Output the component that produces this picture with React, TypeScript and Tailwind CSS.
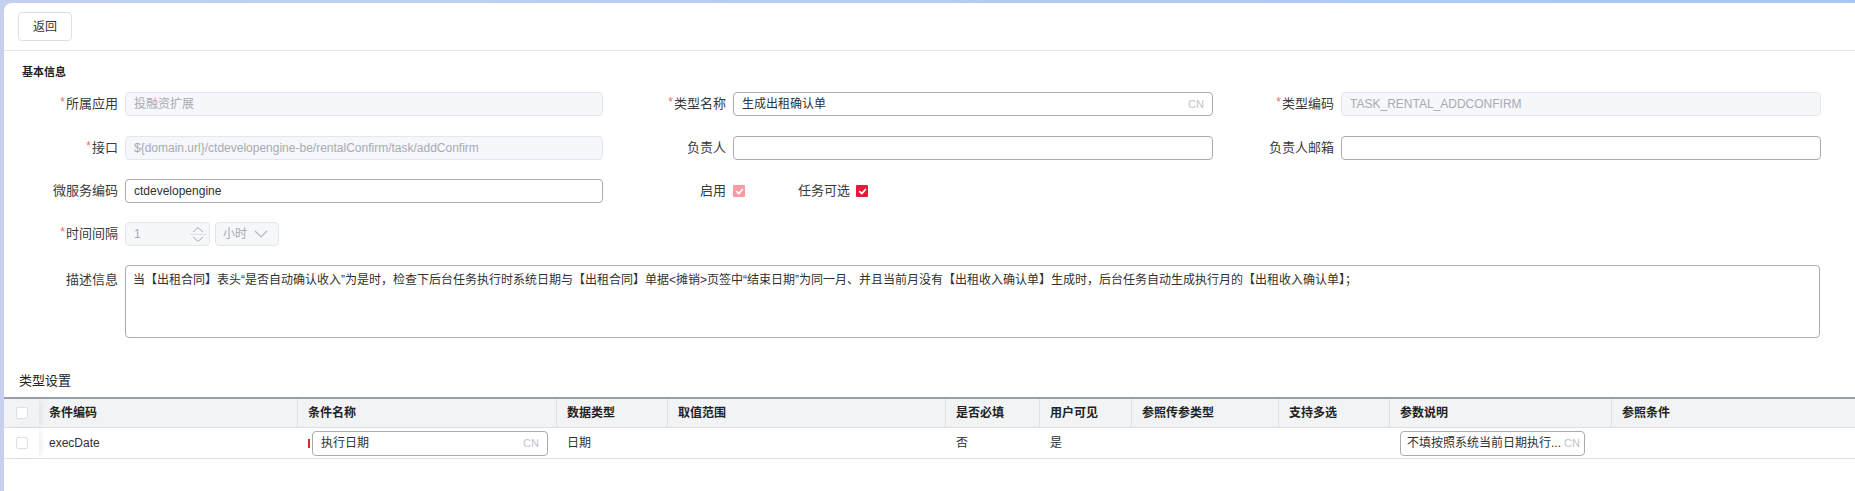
import React from 'react';

const font = "font-['Liberation_Sans','Noto_Sans_CJK_SC',sans-serif]";

function Req() {
  return <span className="text-[#f56c6c] text-[12px] relative -top-[2px] mr-[1px]">*</span>;
}

function Label({ text, required, top }: { text: string; required?: boolean; top?: boolean }) {
  return (
    <div
      className={`w-[115px] shrink-0 pr-[7px] text-right text-[13px] text-[#3a3a3a] ${
        top ? 'pt-[6px] leading-[18px]' : 'leading-[24px]'
      }`}
    >
      {required && <Req />}
      {text}
    </div>
  );
}

function TextInput({
  value,
  disabled,
  cn,
  className = '',
}: {
  value?: string;
  disabled?: boolean;
  cn?: boolean;
  className?: string;
}) {
  return (
    <div
      className={`h-[24px] flex items-center rounded-[4px] border text-[12px] ${
        disabled ? 'bg-[#f5f7fa] border-[#e4e7ed] text-[#a8abb2]' : 'bg-white border-[#a8abb2] text-[#303133]'
      } ${className}`}
    >
      <span className="flex-1 whitespace-nowrap overflow-hidden">{value}</span>
      {cn && <span className="text-[11px] text-[#c0c4cc] ml-[2px]">CN</span>}
    </div>
  );
}

function CheckMark({ color }: { color: string }) {
  return (
    <span className={`inline-flex w-[12px] h-[12px] items-center justify-center rounded-[1px] ${color}`}>
      <svg width="9" height="9" viewBox="0 0 10 10">
        <path d="M2 5.2 L4.2 7.3 L8.2 2.8" fill="none" stroke="white" strokeWidth="2" strokeLinecap="round" strokeLinejoin="round" />
      </svg>
    </span>
  );
}

function Box() {
  return <span className="block w-[12px] h-[12px] rounded-[2px] border border-[#dcdfe6] bg-white" />;
}

const cols = [
  '',
  '条件编码',
  '条件名称',
  '数据类型',
  '取值范围',
  '是否必填',
  '用户可见',
  '参照传参类型',
  '支持多选',
  '参数说明',
  '参照条件',
];

const gridCols =
  'grid grid-cols-[35px_259px_259px_111px_278px_94px_92px_147px_111px_222px_243px]';

export default function App() {
  return (
    <div className={`min-h-screen bg-gradient-to-r from-[#c4d0ee] to-[#a7c7f2] pt-[3px] pl-[4px] ${font}`}>
      <div className="bg-white rounded-tl-[8px] min-h-[488px]">
        {/* toolbar */}
        <div className="h-[48px] border-b border-[#e1e2ea] flex items-center pl-[14px]">
          <button className="w-[54px] h-[29px] rounded-[4px] border border-[#dcdfe6] text-[12px] text-[#333] bg-white">
            返回
          </button>
        </div>

        {/* basic info */}
        <div className="pl-[18px] pt-[14px] text-[11px] leading-[15px] font-bold text-[#222]">基本信息</div>

        <div className="pl-[6px] mt-[12px] flex flex-col">
          <div className="grid grid-cols-[608px_608px_608px]">
            <div className="flex">
              <Label text="所属应用" required />
              <TextInput value="投融资扩展" disabled className="w-[478px] px-[8px]" />
            </div>
            <div className="flex">
              <Label text="类型名称" required />
              <TextInput value="生成出租确认单" cn className="w-[480px] px-[8px]" />
            </div>
            <div className="flex">
              <Label text="类型编码" required />
              <TextInput value="TASK_RENTAL_ADDCONFIRM" disabled className="w-[480px] px-[8px]" />
            </div>
          </div>

          <div className="grid grid-cols-[608px_608px_608px] mt-[20px]">
            <div className="flex">
              <Label text="接口" required />
              <TextInput value="${domain.url}/ctdevelopengine-be/rentalConfirm/task/addConfirm" disabled className="w-[478px] px-[8px]" />
            </div>
            <div className="flex">
              <Label text="负责人" />
              <TextInput className="w-[480px] px-[8px]" />
            </div>
            <div className="flex">
              <Label text="负责人邮箱" />
              <TextInput className="w-[480px] px-[8px]" />
            </div>
          </div>

          <div className="grid grid-cols-[608px_608px_608px] mt-[19px]">
            <div className="flex">
              <Label text="微服务编码" />
              <TextInput value="ctdevelopengine" className="w-[478px] px-[8px]" />
            </div>
            <div className="flex items-center">
              <Label text="启用" />
              <CheckMark color="bg-[#f79ba5]" />
              <div className="w-[111px] pr-[6px] text-right text-[13px] text-[#3a3a3a] leading-[24px]">任务可选</div>
              <CheckMark color="bg-[#e8183a]" />
            </div>
            <div />
          </div>

          <div className="flex mt-[19px]">
            <Label text="时间间隔" required />
            <div className="w-[85px] h-[24px] flex items-center rounded-[4px] border border-[#e4e7ed] bg-[#f5f7fa] text-[12px] text-[#a8abb2]">
              <span className="flex-1 pl-[8px]">1</span>
              <div className="w-[22px] h-full flex flex-col items-center justify-center">
                <svg width="12" height="7" viewBox="0 0 12 7">
                  <path d="M1 6 L6 1.5 L11 6" fill="none" stroke="#a8abb2" strokeWidth="1" />
                </svg>
                <span className="block w-[16px] h-px bg-[#dcdfe6] my-[1px]" />
                <svg width="12" height="7" viewBox="0 0 12 7">
                  <path d="M1 1 L6 5.5 L11 1" fill="none" stroke="#a8abb2" strokeWidth="1" />
                </svg>
              </div>
            </div>
            <div className="ml-[5px] w-[64px] h-[24px] flex items-center rounded-[4px] border border-[#e4e7ed] bg-[#f5f7fa] text-[12px] text-[#a8abb2] pl-[7px]">
              <span>小时</span>
              <svg className="ml-[7px]" width="14" height="8" viewBox="0 0 14 8">
                <path d="M1 1 L7 7 L13 1" fill="none" stroke="#b4b7be" strokeWidth="1.2" />
              </svg>
            </div>
          </div>

          <div className="flex mt-[19px]">
            <Label text="描述信息" top />
            <div className="w-[1695px] h-[73px] rounded-[4px] border border-[#a8abb2] px-[7px] pt-[5px] text-[12px] leading-[18px] text-[#303133]">
              当【出租合同】表头“是否自动确认收入”为是时，检查下后台任务执行时系统日期与【出租合同】单据&lt;摊销&gt;页签中“结束日期”为同一月、并且当前月没有【出租收入确认单】生成时，后台任务自动生成执行月的【出租收入确认单】；
            </div>
          </div>
        </div>

        {/* type settings */}
        <div className="pl-[15px] mt-[34px] text-[13px] leading-[18px] text-[#222]">类型设置</div>

        <div className="mt-[7px] border-t-2 border-[#9a9ea8] text-[12px]">
          <div className={`${gridCols} bg-[#f2f3f5] border-b border-[#dcdfe6] h-[29px]`}>
            {cols.map((c, i) => (
              <div
                key={i}
                className={`flex items-center ${
                  i === 0
                    ? 'justify-center shadow-[4px_0_6px_-2px_rgba(0,0,0,0.08)] relative z-10'
                    : 'pl-[10px] font-bold text-[#222]'
                } ${i > 0 && i < cols.length - 1 ? 'border-r border-[#dcdfe6]' : ''}`}
              >
                {i === 0 ? <Box /> : c}
              </div>
            ))}
          </div>
          <div className={`${gridCols} border-b border-[#dcdfe6] h-[31px] text-[#303133]`}>
            <div className="flex items-center justify-center shadow-[4px_0_6px_-2px_rgba(0,0,0,0.08)] relative z-10 bg-white">
              <Box />
            </div>
            <div className="flex items-center pl-[10px]">execDate</div>
            <div className="flex items-center pl-[10px]">
              <span className="w-[2px] h-[9px] bg-[#e5242b] mr-[2px]" />
              <TextInput value="执行日期" cn className="w-[236px] h-[25px] px-[8px]" />
            </div>
            <div className="flex items-center pl-[10px]">日期</div>
            <div />
            <div className="flex items-center pl-[10px]">否</div>
            <div className="flex items-center pl-[10px]">是</div>
            <div />
            <div />
            <div className="flex items-center pl-[10px]">
              <TextInput value="不填按照系统当前日期执行..." cn className="w-[185px] h-[25px] pl-[6px] pr-[4px]" />
            </div>
            <div />
          </div>
        </div>
      </div>
    </div>
  );
}
